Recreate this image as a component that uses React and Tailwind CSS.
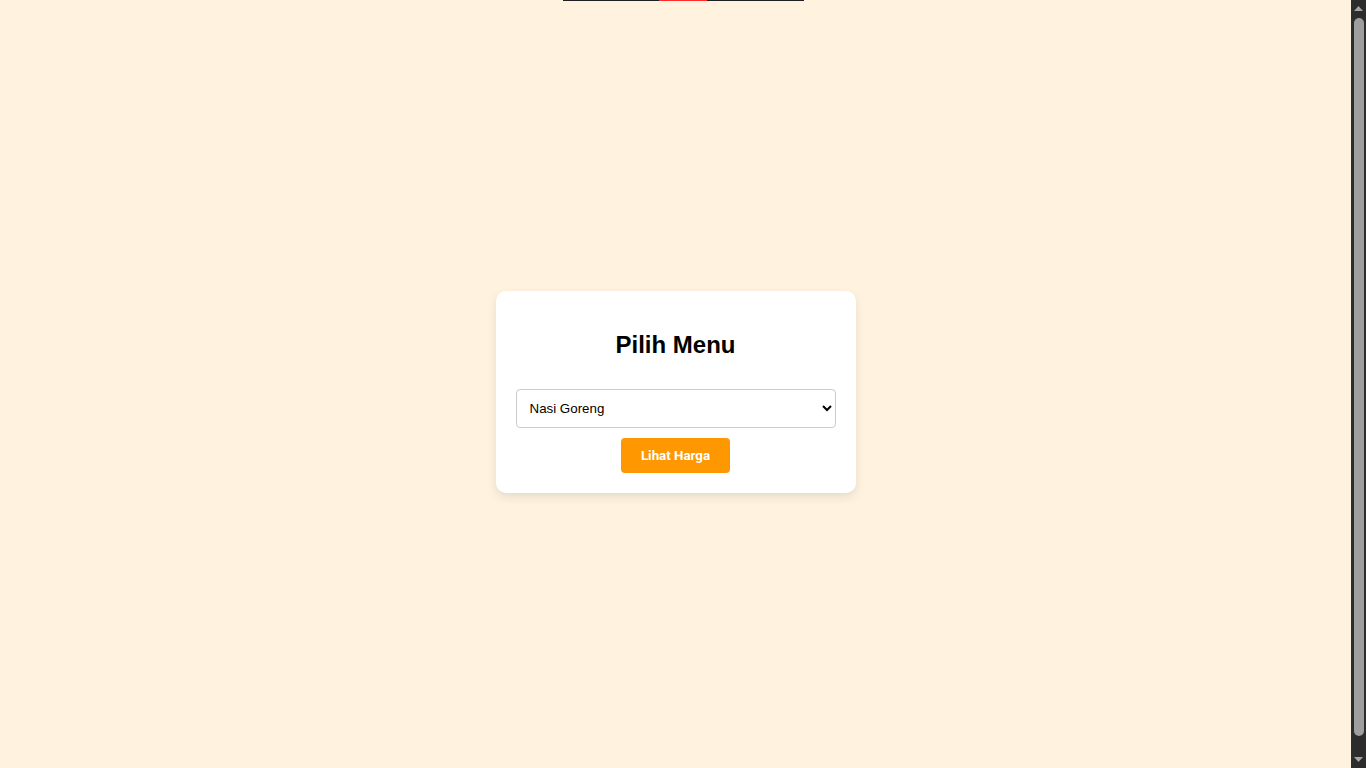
export default function App() {
  return (
    <div className="flex h-screen w-full overflow-hidden bg-[#fff3e0]" style={{ fontFamily: '"Liberation Sans", Arial, sans-serif' }}>
      <main className="relative flex flex-1 items-center justify-center pt-4">
        <div className="absolute top-0 left-[563px] flex h-px w-[241px]">
          <div className="h-px w-[96px] bg-[#1f1f1f]" />
          <div className="h-px w-[48px] bg-[#ff2a2a]" />
          <div className="h-px w-[97px] bg-[#1f1f1f]" />
        </div>
        <div className="w-[360px] rounded-[10px] bg-white px-5 pt-5 pb-5 text-center shadow-[0_4px_10px_rgba(0,0,0,0.1)]">
          <h2 className="my-5 text-[24px] leading-[28px] font-bold text-black">Pilih Menu</h2>
          <select className="my-[10px] h-[39px] w-full rounded-[4px] border border-[#cccccc] bg-white pr-[6px] pl-[9px] text-[13.333px] text-black">
            <option>Nasi Goreng</option>
            <option>Mie Ayam</option>
            <option>Sate Ayam</option>
          </select>
          <button
            className="h-[35px] w-[109px] rounded-[4px] bg-[#ff9800] text-[13.333px] font-bold text-white"
            style={{ fontFamily: 'Roboto, "Liberation Sans", sans-serif' }}
          >
            Lihat Harga
          </button>
        </div>
      </main>
      <div className="flex w-[15px] flex-col items-center bg-[#2c2c2c]">
        <div className="flex h-[17px] w-full items-center justify-center">
          <svg width="9" height="5" viewBox="0 0 9 5"><path d="M4.5 0 L9 5 L0 5 Z" fill="#a3a3a3" /></svg>
        </div>
        <div className="mt-px h-[718px] w-[10px] rounded-full bg-[#9e9e9e]" />
        <div className="flex-1" />
        <div className="flex h-[17px] w-full items-center justify-center">
          <svg width="9" height="5" viewBox="0 0 9 5"><path d="M0 0 L9 0 L4.5 5 Z" fill="#a3a3a3" /></svg>
        </div>
      </div>
    </div>
  );
}
